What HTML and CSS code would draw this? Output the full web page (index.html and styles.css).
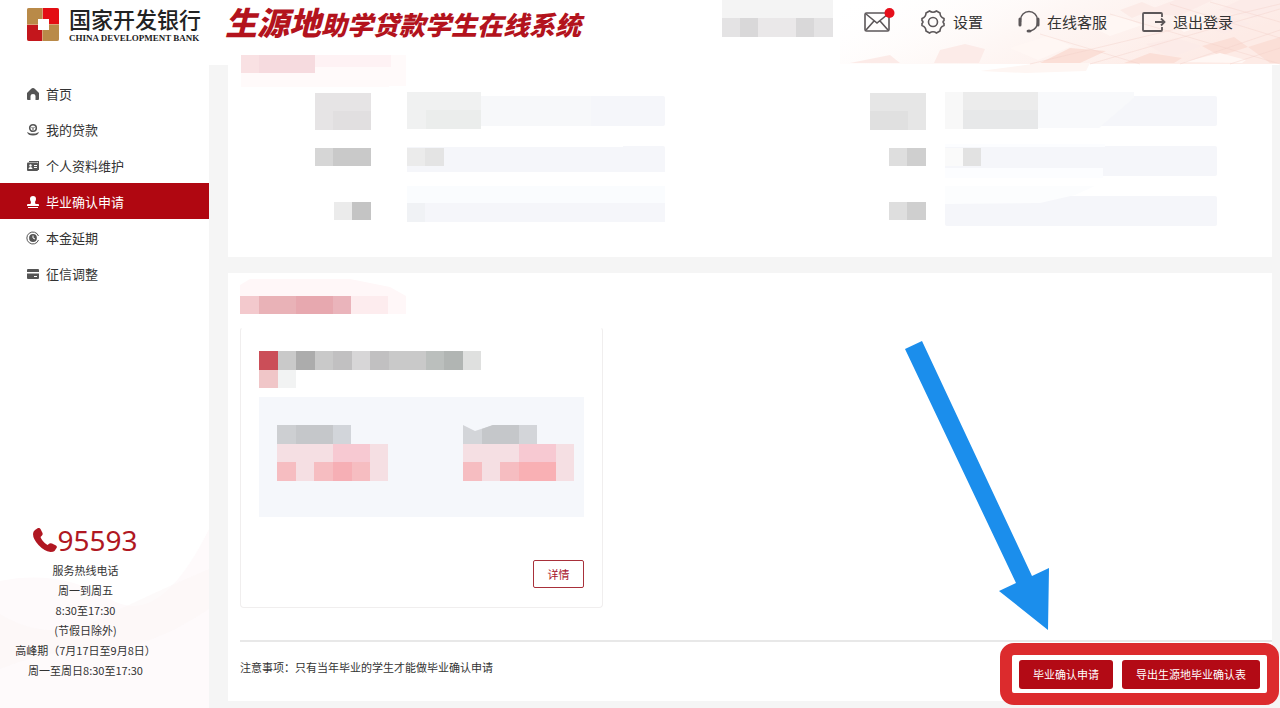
FILE: index.html
```html
<!DOCTYPE html>
<html lang="zh-CN">
<head>
  <meta charset="UTF-8">
  <meta name="viewport" content="width=device-width, initial-scale=1.0">
  <title>生源地助学贷款学生在线系统</title>
  <link rel="stylesheet" href="styles.css">
</head>
<body>
  <header class="header">
    <svg class="header-bg" width="440" height="75" viewBox="0 0 440 75" aria-hidden="true">
      <defs>
        <linearGradient id="warm" x1="0" y1="0" x2="1" y2="0.3">
          <stop offset="0" stop-color="#fff" stop-opacity="0"/>
          <stop offset="0.5" stop-color="#fef7f5"/>
          <stop offset="1" stop-color="#fdebe6"/>
        </linearGradient>
      </defs>
      <rect width="440" height="64" fill="url(#warm)"/>
      <path fill="#fcebe8" d="M100 50l25-6 20 5-6 14H94zM10 63l40-8 10 8zM300 13l35-13h38l-34 16zM378 10l22-10h40v8l-24 10zM306 44l30-6 26 8-32 12zM360 24l30-8 20 8-26 10z"/>
      <path fill="#fbdfd7" d="M200 63l30-15 36 3-26 12zM284 63l26-10 32 5-8 5zM408 47l32-10v26h-10zM362 46l32-9 14 10-28 9z"/>
      <path fill="#fcebe7" d="M280 10l22-8 14 6-24 10z"/>
      <path fill="#fff7f4" d="M170 48l38-12 24 10-34 14zM246 24l30-9 26 10-32 11zM344 62l36-9 26 7-4 3zM330 22l30-8 14 8-30 10z"/>
      <path fill="#fef6f3" d="M140 71l60-8h50l-4 8-60 2z"/>
      <path fill="none" stroke="#f3cfc8" d="M190 64L440 4M250 64l190-55M340 64l100-34M390 64l50-16M270 14l170 50M330 4l110 34M200 34l100 30M370 2l70 20" opacity="0.4"/>
    </svg>
    <div class="logo">
      <svg width="32" height="33" viewBox="0 0 32 33" aria-hidden="true">
        <rect y="0" width="32" height="33" rx="2" fill="#d9a27a"/>
        <path fill="#b98a48" d="M2 0h13v16H0V2q0-2 2-2z"/>
        <path fill="#e30d13" d="M16 0h14q2 0 2 2v14H16z"/>
        <path fill="#c4161c" d="M0 17h15v16H2q-2 0-2-2z"/>
        <path fill="#b98a48" d="M16 17h16v14q0 2-2 2H16z"/>
        <rect x="11" y="11" width="11" height="11" fill="#fff"/>
      </svg>
      <div class="logo-text">
        <span class="logo-cn">国家开发银行</span>
        <span class="logo-en">CHINA DEVELOPMENT BANK</span>
      </div>
    </div>
    <h1 class="system-title"><span class="big">生源地</span>助学贷款学生在线系统</h1>
    <nav class="tools">
      <svg class="user" width="111" height="37" viewBox="0 0 111 37" role="img" aria-label="用户">
        <path fill="#f4f4f4" d="M0 0h111v18H0z"/>
        <path fill="#e4e3e4" d="M0 18h111v19H0z"/>
        <path fill="#d9d8d9" d="M18 18h18v19H18zM74 18h18v19H74z"/>
        <path fill="#eae8e9" d="M36 18h38v19H36z"/>
      </svg>
      <a class="tool mail" href="#" aria-label="消息">
        <svg width="32" height="32" viewBox="0 0 32 32" fill="none" stroke="#5c5759" stroke-width="1.6">
          <rect x="1" y="7" width="24" height="18" rx="1.5"/>
          <path d="M2 8l11 9 11-9M2 24l8-9M24 24l-8-9"/>
          <circle cx="25.5" cy="7" r="5" fill="#e60f1b" stroke="none"/>
        </svg>
      </a>
      <a class="tool settings" href="#">
        <svg width="26" height="26" viewBox="0 0 26 26" fill="none" stroke="#5c5759" stroke-width="1.6">
          <path d="M9.5 2q3.5 2.5 7 0l3.5 2q0 4 4 5.500v2q-2 1.500 0 3v2q-4 1.500-4 5.500l-3.500 2q-3.500-2.500-7 0L6 22q0-4-4-5.500v-2q2-1.500 0-3v-2Q6 8 6 4z"/>
          <circle cx="13" cy="13" r="4.500"/>
        </svg>
        <span>设置</span>
      </a>
      <a class="tool service" href="#">
        <svg width="22" height="24" viewBox="0 0 22 24" fill="none" stroke="#5c5759" stroke-width="1.5">
          <path d="M2.5 12V10a8.500 8.500 0 0 1 17 0v2q0 7-7 9"/>
          <path d="M2 9v6M20 9v6" stroke-width="3" stroke-linecap="round"/>
          <ellipse cx="11" cy="21" rx="2.5" ry="1.5" fill="#5c5759" stroke="none"/>
        </svg>
        <span>在线客服</span>
      </a>
      <a class="tool logout" href="#">
        <svg width="24" height="22" viewBox="0 0 24 22" fill="none" stroke="#5c5759" stroke-width="1.8">
          <path d="M20 6V3q0-1-1-1H2q-1 0-1 1v16q0 1 1 1h17q1 0 1-1v-3M13 11h9M19 7.500l3.500 3.500-3.500 3.500"/>
        </svg>
        <span>退出登录</span>
      </a>
    </nav>
  </header>

  <div class="layout">
    <aside class="sidebar">
      <nav class="menu">
        <a href="#" class="menu-item">
          <svg width="14" height="14" viewBox="0 0 14 14" fill="#555"><path d="M7 1Q8 1 9 2l4 4v6q0 1-1 1H9.500V9q0-2-2.500-2T4.500 9v4H2q-1 0-1-1V6l4-4q1-1 2-1z"/></svg>
          首页
        </a>
        <a href="#" class="menu-item">
          <svg width="14" height="14" viewBox="0 0 14 14" fill="none" stroke="#555"><circle cx="7" cy="5" r="3.3" stroke-width="1.6"/><path d="M5.5 4L7 5.500 8.500 4M7 5.500V7"/><path d="M1 9q1 3.500 6 3.500T13 9L9.500 10.500h-5z" fill="#555" stroke="none"/></svg>
          我的贷款
        </a>
        <a href="#" class="menu-item">
          <svg width="14" height="14" viewBox="0 0 14 14"><path fill="#555" d="M3 2h10v9h-1V3H3z"/><rect x="1" y="3.5" width="11" height="8.5" rx="1" fill="#555"/><circle cx="4.5" cy="6.5" r="1.2" fill="#fff"/><path fill="#fff" d="M2.500 10q0-2 2-2t2 2zM8 6h3v1H8zM8 8h3v1H8z"/></svg>
          个人资料维护
        </a>
        <a href="#" class="menu-item active">
          <svg width="14" height="14" viewBox="0 0 14 14" fill="#fff"><path d="M7 1q3 0 3 3 0 1.500-1 3l.5 2H12q1 0 1 1v1H1v-1q0-1 1-1h2.500L5 7Q4 5.500 4 4q0-3 3-3zM2 12h10v1H2z"/></svg>
          毕业确认申请
        </a>
        <a href="#" class="menu-item">
          <svg width="14" height="14" viewBox="0 0 14 14" fill="none" stroke="#555"><path d="M12.500 9A6 6 0 1 1 12.500 5"/><circle cx="7" cy="7" r="3.9" fill="#555" stroke="none"/><path stroke="#fff" d="M7 4.500V7l2 1"/></svg>
          本金延期
        </a>
        <a href="#" class="menu-item">
          <svg width="14" height="14" viewBox="0 0 14 14" fill="#555"><path d="M2 2h10q1 0 1 1v2H1V3q0-1 1-1zM1 6.500h12V11q0 1-1 1H2q-1 0-1-1z"/><path fill="#fff" d="M8 9h3v1H8z"/></svg>
          征信调整
        </a>
      </nav>
      <div class="hotline">
        <svg class="hotline-bg" viewBox="0 0 209 200" preserveAspectRatio="none" aria-hidden="true">
          <path fill="#fefafb" d="M0 72Q60 60 110 90T209 20v180H0z"/>
          <path fill="#fcf6f7" d="M0 105q50 30 100 5t109-50v40Q150 140 100 140T0 160z" opacity="0.6"/>
        </svg>
        <p class="phone">
          <svg width="24" height="24" viewBox="0 0 24 24" fill="#b01722"><path d="M2 2l3-2q1.500-.5 2.500 1l2 4q.5 1.500-.5 2.500L7.500 9q1.500 4.500 7 8l2-1.500q1-.7 2.500 0l4 2q1.500 1 .5 2.500l-2 3q-1 1-4 1Q11 23 5.500 17T0 6Q0 3.500 2 2z"/></svg>95593
        </p>
        <p>服务热线电话</p>
        <p>周一到周五</p>
        <p>8:30至17:30</p>
        <p>(节假日除外)</p>
        <p>高峰期（7月17日至9月8日）</p>
        <p>周一至周日8:30至17:30</p>
      </div>
    </aside>

    <main class="content">
      <section class="panel info">
        <svg class="info-title" width="180" height="38" viewBox="0 0 180 38" aria-hidden="true">
          <path fill="#fffafa" d="M0 0h165v32H0z"/>
          <path fill="#fef2f4" d="M74 0h76v12H74z"/>
          <path fill="#f9e1e3" d="M0 0h18v18H0z"/>
          <path fill="#f6dbdf" d="M18 0h56v18H18z"/>
        </svg>
        <div class="fields">
          <div class="field">
            <label for="f1"><svg width="56" height="37" viewBox="0 0 56 37"><path fill="#e6e4e5" d="M0 0h56v37H0z"/><path fill="#e1dfe0" d="M18 18h38v19H18z"/></svg></label>
            <div class="value">
              <input id="f1" type="text" aria-label="信息一" readonly>
              <svg class="mosaic" width="272" height="50" viewBox="0 0 272 50"><path fill="#fff" d="M-4 0h18v50H-4z"/><path fill="#f0f1f1" d="M14 6h74v37H14z"/><path fill="#ebedec" d="M33 24h55v19H33z"/><path fill="#f7f8fa" d="M88 10h110v30H88z"/></svg>
            </div>
          </div>
          <div class="field">
            <label for="f2"><svg width="56" height="37" viewBox="0 0 56 37"><path fill="#e6e6e6" d="M0 0h56v37H0z"/><path fill="#e0e0e0" d="M0 18h38v19H0z"/></svg></label>
            <div class="value">
              <input id="f2" type="text" aria-label="信息二" readonly>
              <svg class="mosaic" width="272" height="50" viewBox="0 0 272 50"><path fill="#f8f8f8" d="M0 6h18v37H0z"/><path fill="#ececec" d="M18 6h75v37H18z"/><path fill="#e7e8e9" d="M18 24h75v19H18z"/><path fill="#f8f9fb" d="M93 6h96v6l-35 30H93z"/></svg>
            </div>
          </div>
          <div class="field">
            <label for="f3"><svg width="56" height="26" viewBox="0 0 56 26"><path fill="#d6d6d6" d="M0 0h18v18H0z"/><path fill="#c9c9c9" d="M18 0h38v18H18z"/></svg></label>
            <div class="value">
              <input id="f3" type="text" aria-label="信息三" readonly>
              <svg class="mosaic" width="272" height="50" viewBox="0 0 272 50"><path fill="#fff" d="M-4 6h18v38H-4zM14 8h216v3H14zM14 36h258v6H14z"/><path fill="#ebebeb" d="M14 12h18v18H14z"/><path fill="#e4e4e4" d="M32 12h19v18H32z"/></svg>
            </div>
          </div>
          <div class="field">
            <label for="f4"><svg width="56" height="26" viewBox="0 0 56 26"><path fill="#dedede" d="M19 0h18v18H19z"/><path fill="#cfcfcf" d="M37 0h19v18H37z"/></svg></label>
            <div class="value">
              <input id="f4" type="text" aria-label="信息四" readonly>
              <svg class="mosaic" width="272" height="50" viewBox="0 0 272 50"><path fill="#fcfdff" d="M0 8h160v3H0zM0 32h158v10H0z"/><path fill="#fafafa" d="M0 12h18v18H0z"/><path fill="#e2e2e2" d="M18 12h18v18H18z"/></svg>
            </div>
          </div>
          <div class="field">
            <label for="f5"><svg width="56" height="18" viewBox="0 0 56 18"><path fill="#ebebeb" d="M19 0h18v18H19z"/><path fill="#c4c4c4" d="M37 0h19v18H37z"/></svg></label>
            <div class="value">
              <input id="f5" type="text" aria-label="信息五" readonly>
              <svg class="mosaic" width="272" height="50" viewBox="0 0 272 50"><path fill="#fff" d="M-4 0h18v50H-4zM14 36h258v6H14z"/><path fill="#fafcfe" d="M14 0h258v17H14z"/><path fill="#f0f2f5" d="M14 17h18v19H14z"/></svg>
            </div>
          </div>
          <div class="field">
            <label for="f6"><svg width="56" height="18" viewBox="0 0 56 18"><path fill="#dedede" d="M19 0h18v18H19z"/><path fill="#cfcfcf" d="M37 0h19v18H37z"/></svg></label>
            <div class="value">
              <input id="f6" type="text" aria-label="信息六" readonly>
              <svg class="mosaic" width="272" height="50" viewBox="0 0 272 50"><path fill="#fcfdfe" d="M0 0h150l-20 9-35 8-95 1z"/></svg>
            </div>
          </div>
        </div>
      </section>

      <section class="panel apply">
        <svg class="apply-title" width="180" height="42" viewBox="0 0 180 42" aria-hidden="true">
          <path fill="#fff7f8" d="M10 6h100l40 8 16 9v18H0V12z"/>
          <path fill="#fdecee" d="M111 23h37v18h-37z"/>
          <path fill="#f3c9cd" d="M0 23h19v18H0z"/>
          <path fill="#e9b2b7" d="M19 23h37v18H19z"/>
          <path fill="#e7a8af" d="M56 23h37v18H56z"/>
          <path fill="#eab4bb" d="M93 23h18v18H93z"/>
        </svg>
        <div class="loan-card">
          <svg width="223" height="37" viewBox="0 0 223 37" aria-hidden="true">
            <path fill="#cb4e58" d="M0 0h19v19H0z"/>
            <path fill="#c9c9c9" d="M19 0h184v19H19z"/>
            <path fill="#acacac" d="M37 0h19v19H37z"/>
            <path fill="#c1c0c1" d="M74 0h19v19H74zM111 0h19v19h-19z"/>
            <path fill="#d7d6d7" d="M93 0h18v19H93z"/>
            <path fill="#bbbfbd" d="M167 0h18v19h-18z"/>
            <path fill="#b1b5b3" d="M185 0h19v19h-19z"/>
            <path fill="#dfe0df" d="M204 0h18v19h-18z"/>
            <path fill="#f0c6c8" d="M0 19h19v18H0z"/>
            <path fill="#f2f3f3" d="M19 19h18v18H19z"/>
          </svg>
          <div class="amounts">
            <svg width="111" height="56" viewBox="0 0 111 56" aria-hidden="true">
              <path fill="#cdcfd2" d="M0 0h56v19H0z"/>
              <path fill="#c5c7ca" d="M19 0h37v19H19z"/>
              <path fill="#d2d5da" d="M56 0h18v19H56z"/>
              <path fill="#f5dfe3" d="M0 19h111v37H0z"/>
              <path fill="#f7c9d2" d="M56 19h37v18H56z"/>
              <path fill="#f6bdc1" d="M0 37h19v19H0zM37 37h56v19H37z"/>
              <path fill="#f6afb5" d="M56 37h19v19H56z"/>
            </svg>
            <svg width="111" height="56" viewBox="0 0 111 56" aria-hidden="true">
              <path fill="#d3d5d9" d="M0 0l12 6L30 0h44v19H0z"/>
              <path fill="#c5c7ca" d="M19 4l11-4h26v19H19z"/>
              <path fill="#f5dfe3" d="M0 19h111v37H0z"/>
              <path fill="#f7c9d2" d="M56 19h37v18H56z"/>
              <path fill="#f6bdc1" d="M0 37h19v19H0zM37 37h56v19H37z"/>
              <path fill="#f9b0b4" d="M56 37h37v19H56z"/>
            </svg>
          </div>
          <button class="detail-btn" type="button">详情</button>
        </div>
        <div class="apply-footer">
          <p>注意事项：只有当年毕业的学生才能做毕业确认申请</p>
          <div class="actions">
            <button type="button">毕业确认申请</button>
            <button type="button">导出生源地毕业确认表</button>
            <svg class="arrow" width="146" height="290" viewBox="904 339 146 290" aria-hidden="true">
              <path fill="#1b8eec" d="M905 348L922 340 1032 575 1049 567 1048 629 999 590 1016 582z"/>
            </svg>
          </div>
        </div>
      </section>
    </main>
  </div>
</body>
</html>
```
FILE: styles.css
```css
* {
  box-sizing: border-box;
}
body {
  margin: 0;
  min-height: 100vh;
  display: flex;
  flex-direction: column;
  font-family: "Noto Sans CJK SC", sans-serif;
  font-size: 11px;
  color: #333;
  background-color: #f5f5f5;
}
p, h1 {
  margin: 0;
}
svg {
  display: block;
  flex: none;
}
a {
  color: inherit;
  text-decoration: none;
}
button {
  font-family: inherit;
  font-size: 11px;
  cursor: pointer;
}

/* header */
.header {
  position: relative;
  display: flex;
  height: 65px;
  padding-left: 27px;
  padding-right: 47px;
  background-color: #fff;
}
.header-bg {
  position: absolute;
  top: 0;
  right: 0;
}
.logo {
  display: flex;
  gap: 10px;
  padding-top: 8px;
}
.logo-text {
  display: flex;
  flex-direction: column;
  color: #222;
  white-space: nowrap;
}
.logo-cn {
  font-size: 22px;
  line-height: 20px;
  font-weight: 500;
}
.logo-en {
  font-family: "Liberation Serif", serif;
  font-size: 9px;
  line-height: 20px;
  font-weight: bold;
}
.system-title {
  margin-left: 24px;
  font-size: 26px;
  line-height: 42px;
  font-weight: 900;
  font-style: italic;
  color: #b3131d;
  white-space: nowrap;
}
.system-title .big {
  font-size: 32px;
}
.tools {
  position: relative;
  display: flex;
  align-items: flex-start;
  margin-left: auto;
  font-size: 15px;
  line-height: 22px;
  white-space: nowrap;
}
.tool {
  display: flex;
  align-items: center;
  gap: 7px;
  height: 44px;
}
.mail {
  margin-left: 31px;
}
.settings {
  margin-left: 24px;
}
.service {
  margin-left: 35px;
}
.logout {
  margin-left: 35px;
}

/* sidebar */
.layout {
  flex: 1;
  display: flex;
}
.sidebar {
  flex: none;
  width: 209px;
  display: flex;
  flex-direction: column;
  padding-top: 10px;
  background-color: #fff;
}
.menu-item {
  display: flex;
  align-items: center;
  gap: 6px;
  height: 36px;
  padding-left: 26px;
  font-size: 13px;
}
.menu-item svg {
  margin-top: 2px;
}
.menu-item.active {
  background-color: #b00711;
  color: #fff;
}
.hotline {
  position: relative;
  margin-top: auto;
  padding: 0 38px 29px 0;
  line-height: 20px;
  text-align: center;
  white-space: nowrap;
}
.hotline p {
  position: relative;
}
.hotline-bg {
  position: absolute;
  left: 0;
  bottom: 0;
  width: 100%;
  height: 200px;
}
.hotline .phone {
  display: flex;
  justify-content: center;
  align-items: center;
  height: 40px;
  font-family: "Noto Sans", sans-serif;
  font-size: 28px;
  color: #b01722;
}

/* content */
.content {
  flex: 1;
  display: flex;
  flex-direction: column;
  gap: 16px;
  padding: 0 8px 8px 19px;
}
.panel {
  background-color: #fff;
}
.info {
  padding: 0 55px 31px 87px;
}
.info-title {
  position: relative;
  margin: -10px 0 3px -74px;
}
.fields {
  display: grid;
  grid-template-columns: 350fr 347fr;
  gap: 20px 205px;
}
.field {
  display: flex;
  align-items: center;
  gap: 19px;
  height: 30px;
}
.value {
  position: relative;
  flex: 1;
}
.value input {
  display: block;
  width: 100%;
  height: 30px;
  border: none;
  border-radius: 2px;
  background-color: #f5f6fa;
}
.mosaic {
  position: absolute;
  right: 0;
  top: -10px;
  overflow: visible;
}
.apply {
  flex: 1;
  display: flex;
  flex-direction: column;
  padding-left: 12px;
}
.loan-card {
  width: 363px;
  margin-top: 12px;
  padding: 23px 18px 19px 18px;
  border: 1px solid #f0eeee;
  border-top-color: #fff;
  border-radius: 4px;
}
.amounts {
  display: flex;
  justify-content: space-between;
  margin-top: 9px;
  padding: 28px 10px 36px 18px;
  background-color: #f5f7fb;
}
.detail-btn {
  display: block;
  width: 51px;
  height: 28px;
  margin: 43px 0 0 auto;
  padding: 0;
  border: 1px solid #a8303a;
  border-radius: 2px;
  background-color: #fff;
  color: #a8122a;
}
.apply-footer {
  display: flex;
  justify-content: space-between;
  align-items: center;
  margin-top: 32px;
  padding: 17px 12px 12px 0;
  border-top: 2px solid #e8e8e8;
}
.apply-footer p {
  margin-bottom: 14px;
}

/* buttons with the red frame round them */
.actions {
  position: relative;
  display: flex;
  gap: 9px;
}
.actions::before {
  content: "";
  position: absolute;
  inset: -17px -19px -16px -19px;
  border: 12px solid #dc2b2d;
  border-radius: 14px;
  pointer-events: none;
}
.actions button {
  height: 29px;
  padding: 0 14px;
  border: none;
  border-radius: 3px;
  background-color: #b30a15;
  color: #fff;
}
.arrow {
  position: absolute;
  right: 210px;
  bottom: 59px;
}
```
